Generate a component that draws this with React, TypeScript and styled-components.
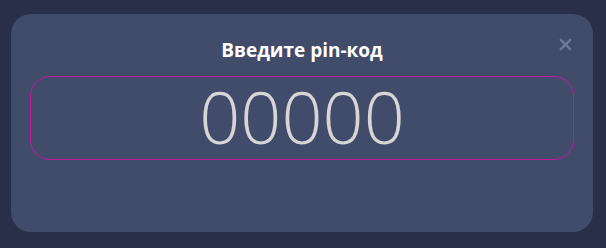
import styled, {createGlobalStyle} from "styled-components";

const GlobalStyle = createGlobalStyle`
    html, body {
        margin: 0;
        padding: 0;
        background: #272f49;
    }
    body {
        font-family: "Open Sans", "Liberation Sans", sans-serif;
    }
`

const App = () => {
    return (
        <>
            <GlobalStyle/>
            <Page>
                <Modal>
                    <CloseButton aria-label={'close'}>
                        <svg width="13" height="13" viewBox="0 0 12 12">
                            <path d="M1 1 L11 11 M11 1 L1 11" stroke="currentColor" strokeWidth="2.2"
                                  strokeLinecap="butt"/>
                        </svg>
                    </CloseButton>
                    <Title>Введите pin-код</Title>
                    <PinInput type="text" inputMode="numeric" placeholder="00000"/>
                </Modal>
            </Page>
        </>
    );
};

export default App;

const Page = styled.div`
    padding: 14px 13px 16px 11px;
`

const Modal = styled.div`
    position: relative;
    display: flex;
    flex-direction: column;
    align-items: stretch;
    box-sizing: border-box;
    width: 582px;
    height: 218px;
    padding: 24px 19px 0;
    background: #414c6b;
    border-radius: 20px;
`

const CloseButton = styled.button`
    position: absolute;
    top: 22px;
    right: 19px;
    width: 17px;
    height: 17px;
    padding: 2px;
    border: none;
    background: transparent;
    color: #6d799a;
    cursor: pointer;
    display: flex;
    align-items: center;
    justify-content: center;
`

const Title = styled.h2`
    margin: 0 0 14px;
    font-size: 19px;
    line-height: 24px;
    font-weight: 700;
    color: #ffffff;
    text-align: center;
`

const PinInput = styled.input`
    box-sizing: border-box;
    width: 100%;
    height: 84px;
    margin: 0;
    padding: 0 0 4px;
    border: 1px solid #c3179f;
    border-radius: 20px;
    background: transparent;
    font-family: "Open Sans", "Liberation Sans", sans-serif;
    font-size: 72px;
    font-weight: 300;
    text-align: center;
    color: #dcdcdc;
    outline: none;

    &::placeholder {
        color: #d6d6d6;
        opacity: 1;
    }
`
